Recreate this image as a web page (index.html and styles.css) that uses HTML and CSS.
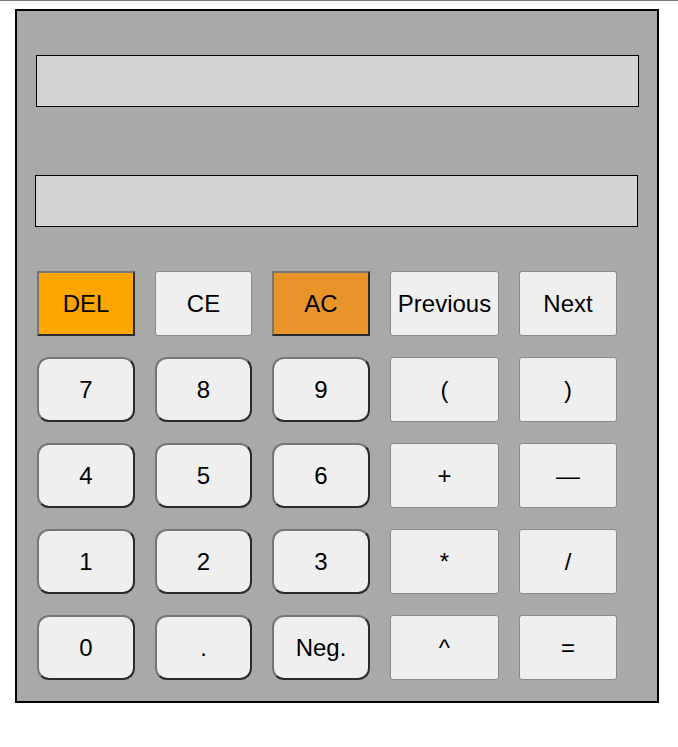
FILE: index.html
```html
<!DOCTYPE html>
<html>
<head>
<meta charset="utf-8">
<link rel="stylesheet" href="styles.css">
</head>
<body>
<div class="topline"></div>
<div class="calc">
  <div class="display display-one"></div>
  <div class="display display-two"></div>
  <div class="keys">
    <button class="key key-del">DEL</button>
    <button class="key key-op">CE</button>
    <button class="key key-ac">AC</button>
    <button class="key key-op">Previous</button>
    <button class="key key-op">Next</button>

    <button class="key key-num">7</button>
    <button class="key key-num">8</button>
    <button class="key key-num">9</button>
    <button class="key key-op">(</button>
    <button class="key key-op">)</button>

    <button class="key key-num">4</button>
    <button class="key key-num">5</button>
    <button class="key key-num">6</button>
    <button class="key key-op">+</button>
    <button class="key key-op">—</button>

    <button class="key key-num">1</button>
    <button class="key key-num">2</button>
    <button class="key key-num">3</button>
    <button class="key key-op">*</button>
    <button class="key key-op">/</button>

    <button class="key key-num">0</button>
    <button class="key key-num">.</button>
    <button class="key key-num">Neg.</button>
    <button class="key key-op">^</button>
    <button class="key key-op">=</button>
  </div>
</div>
</body>
</html>
```
FILE: styles.css
```css
html, body {
  margin: 0;
  padding: 0;
  background: #ffffff;
}

body {
  font-family: "Liberation Sans", Arial, sans-serif;
}

.topline {
  height: 1px;
  background: #7a7a7a;
}

.calc {
  box-sizing: border-box;
  width: 644px;
  height: 694px;
  margin: 8px 0 0 15px;
  border: 2px solid #000000;
  background: #a9a9a9;
  padding-top: 44px;
}

.display {
  box-sizing: border-box;
  width: 603px;
  height: 52px;
  border: 1px solid #000000;
  background: #d3d3d3;
}

.display-one {
  margin-left: 19px;
}

.display-two {
  margin-left: 18px;
  margin-top: 68px;
}

.keys {
  display: grid;
  grid-template-columns: 98px 97px 98px 109px 98px;
  grid-auto-rows: 65px;
  column-gap: 20px;
  row-gap: 21px;
  margin: 44px 0 0 20px;
}

.key {
  box-sizing: border-box;
  width: 100%;
  height: 100%;
  margin: 0;
  padding: 0;
  font-family: "Liberation Sans", Arial, sans-serif;
  font-size: 24px;
  color: #000000;
  background: #efefef;
  cursor: pointer;
}

.key-op {
  border: 1px solid #8a8a8a;
  border-radius: 3px;
}

.key-num,
.key-del,
.key-ac {
  border-width: 2px;
  border-style: solid;
  border-color: #767676 #2b2b2b #2b2b2b #767676;
}

.key-num {
  border-radius: 12px;
}

.key-del {
  background: #ffa500;
}

.key-ac {
  background: #e9942a;
}
```
